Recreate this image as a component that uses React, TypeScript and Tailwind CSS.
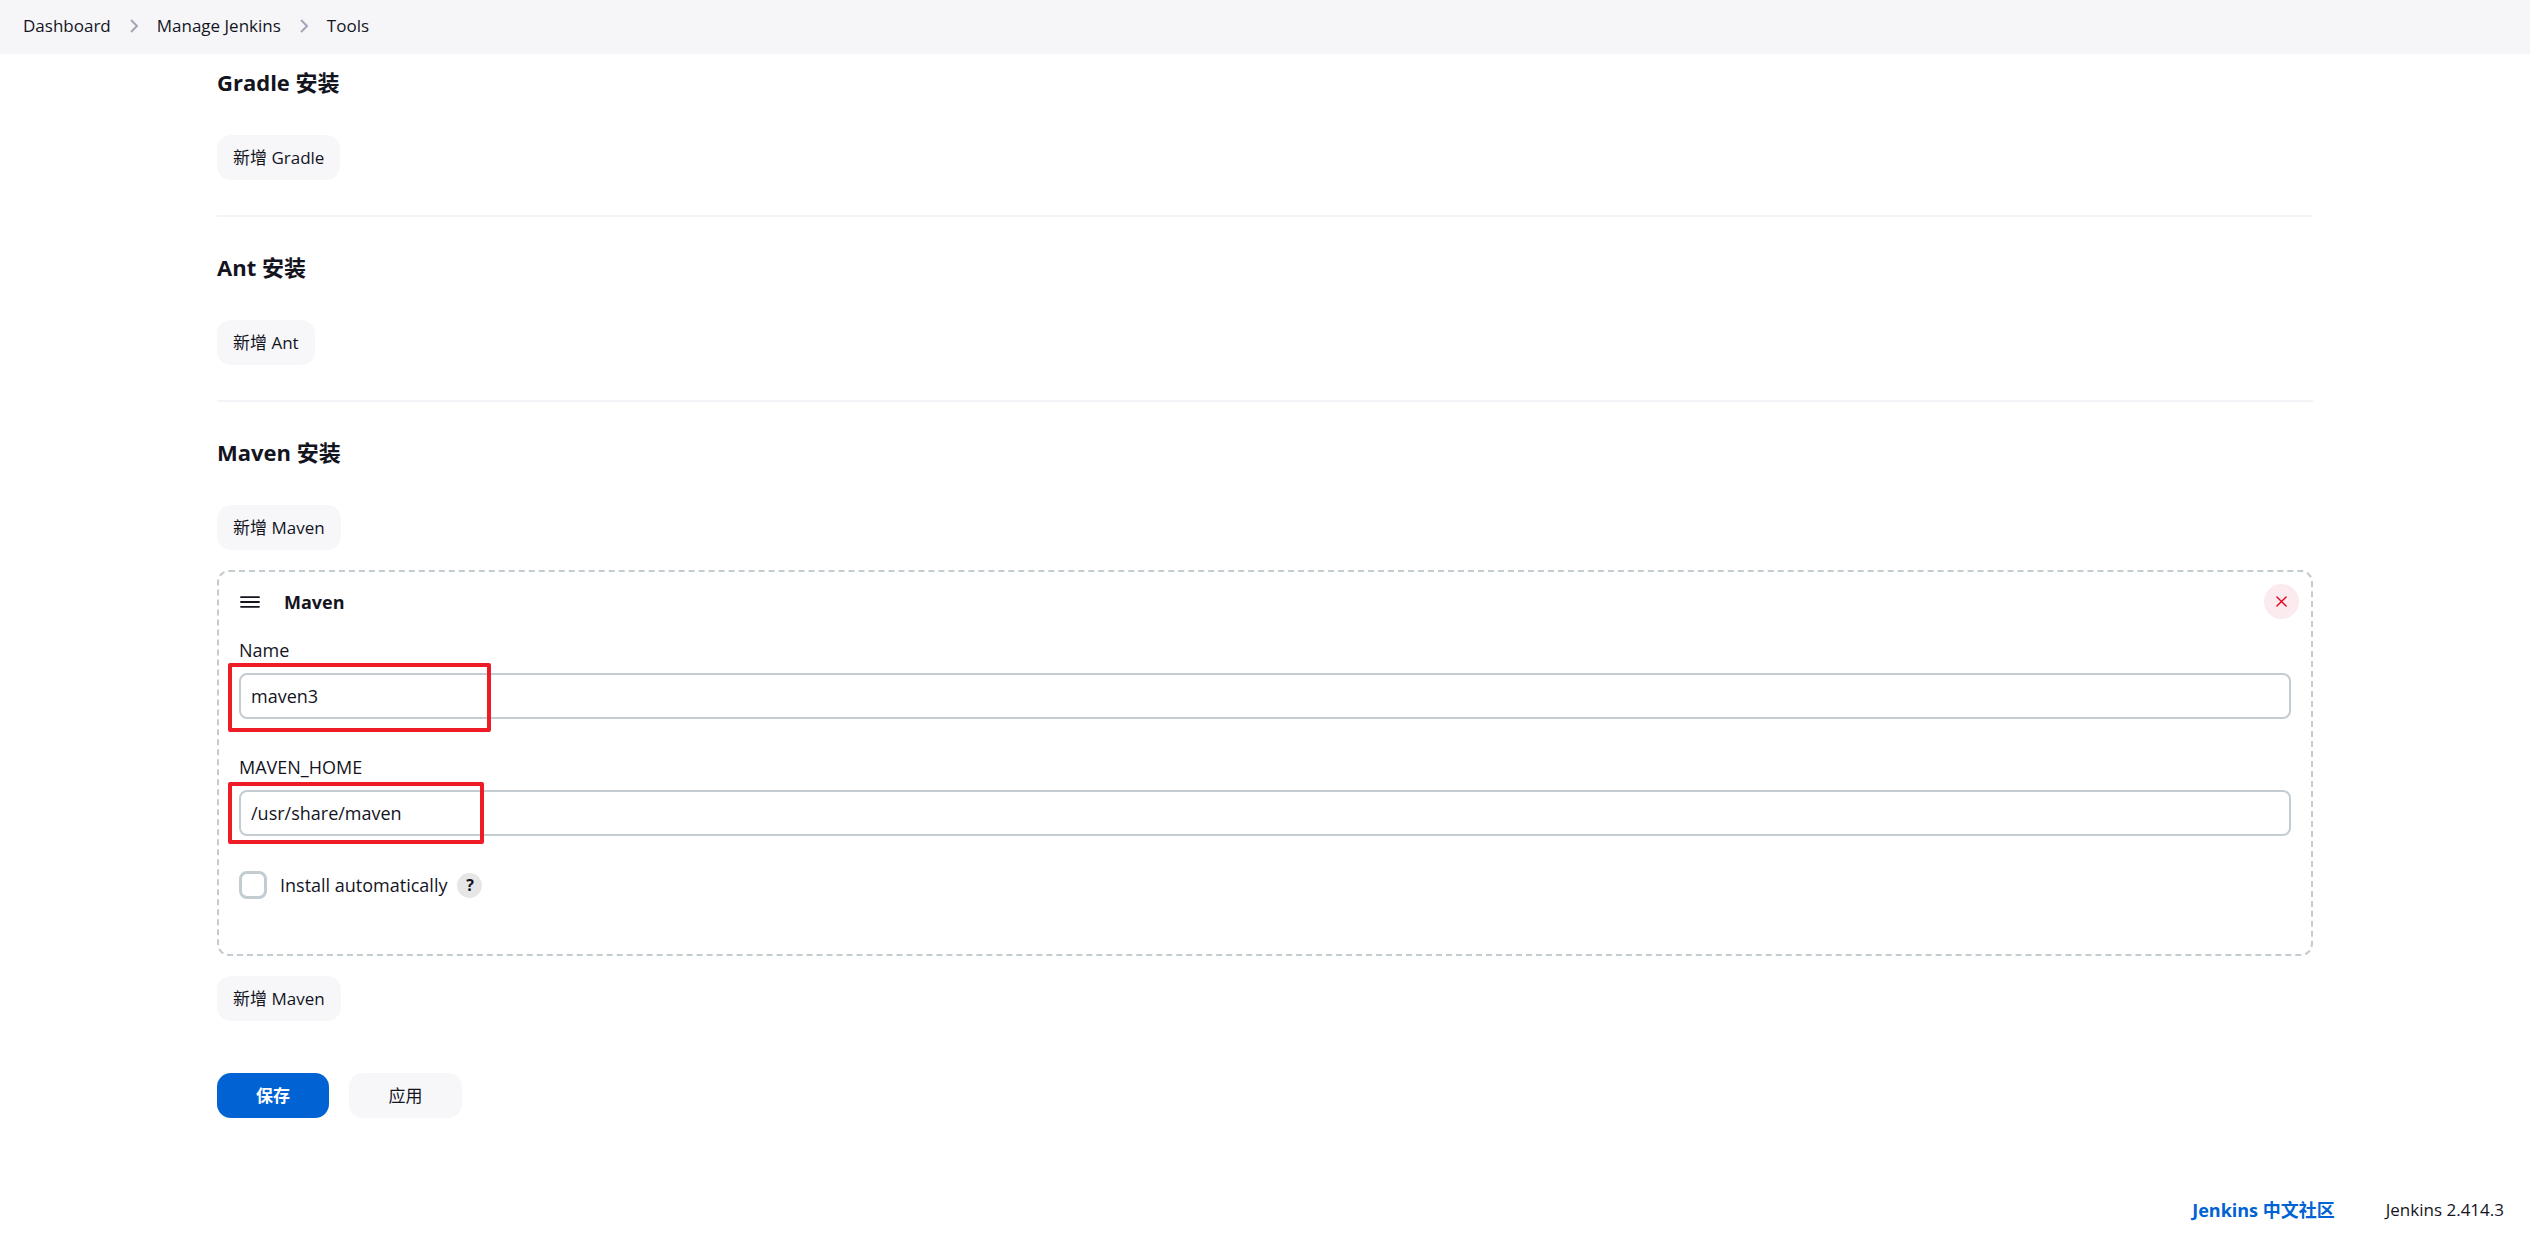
import { useState, type ReactNode } from "react";

function Chevron() {
  return (
    <svg className="h-[14px] w-2" viewBox="0 0 8 14" fill="none" stroke="#a6a6b8" strokeWidth="2" aria-hidden="true">
      <path d="M1 1l6 6-6 6" />
    </svg>
  );
}

function Button({ children, className = "px-4" }: { children: ReactNode; className?: string }) {
  return (
    <button type="button" className={`h-[45px] rounded-[14px] bg-[#f7f7f9] text-[17px] leading-6 ${className}`}>
      {children}
    </button>
  );
}

function Section({ name, children }: { name: string; children?: ReactNode }) {
  return (
    <section>
      <h2 className="mb-[37px] text-[22px] leading-8 font-bold">{name} 安装</h2>
      <Button>新增 {name}</Button>
      {children}
    </section>
  );
}

function Divider() {
  return <hr className="mt-[35px] mb-[34px] border-t-2 border-[#f3f3f8]" />;
}

type FieldProps = {
  id: string;
  label: string;
  value: string;
  onChange: (v: string) => void;
  mark: string;
};

function Field({ id, label, value, onChange, mark }: FieldProps) {
  return (
    <div>
      <label htmlFor={id} className="block pb-[11px] text-lg leading-6">
        {label}
      </label>
      <div className="relative">
        <input
          id={id}
          type="text"
          value={value}
          onChange={(e) => onChange(e.target.value)}
          className="block h-[46px] w-full rounded-lg border-2 border-[#c3ccd1] bg-white px-[10px] text-lg outline-none"
        />
        <span className={`pointer-events-none absolute rounded-[2px] border-4 border-[#ee1c25] ${mark}`} />
      </div>
    </div>
  );
}

export default function App() {
  const [name, setName] = useState("maven3");
  const [home, setHome] = useState("/usr/share/maven");
  const [auto, setAuto] = useState(false);

  return (
    <div className="bg-white font-['Open_Sans','Noto_Sans_CJK_SC',sans-serif] text-[#14141f]">
      <nav className="flex h-[54px] items-center gap-[19px] bg-[#f6f6f8] px-[23px] pb-[2px] text-[17px]">
        <a href="#dashboard">Dashboard</a>
        <Chevron />
        <a href="#manage">Manage Jenkins</a>
        <Chevron />
        <a href="#tools">Tools</a>
      </nav>

      <main className="mx-auto w-full max-w-[2096px] pt-3">
        <Section name="Gradle" />
        <Divider />
        <Section name="Ant" />
        <Divider />
        <Section name="Maven">
          <div className="my-5 rounded-xl border-2 border-dashed border-[#c3ccd1] px-5 pt-3 pb-[55px]">
            <div className="flex h-[35px] items-center">
              <svg className="ml-px h-3 w-5" viewBox="0 0 20 12" stroke="#14141f" strokeWidth="1.8" strokeLinecap="round" aria-hidden="true">
                <path d="M1 1.2h18M1 6h18M1 10.8h18" />
              </svg>
              <h3 className="ml-6 text-lg leading-6 font-bold">Maven</h3>
              <button
                type="button"
                aria-label="Delete"
                className="-mr-2 ml-auto flex size-[35px] items-center justify-center rounded-full bg-[#fcebee]"
              >
                <svg className="size-[11px]" viewBox="0 0 12 12" stroke="#e6001f" strokeWidth="1.5" strokeLinecap="round" aria-hidden="true">
                  <path d="M1 1l10 10M11 1L1 11" />
                </svg>
              </button>
            </div>
            <div className="mt-[19px] flex flex-col gap-9">
              <Field
                id="name"
                label="Name"
                value={name}
                onChange={setName}
                mark="-top-[10px] -left-[11px] h-[69px] w-[263px]"
              />
              <Field
                id="home"
                label="MAVEN_HOME"
                value={home}
                onChange={setHome}
                mark="-top-2 -left-[11px] h-[62px] w-[256px]"
              />
            </div>
            <div className="mt-[35px] flex h-7 items-center">
              <input
                id="auto"
                type="checkbox"
                checked={auto}
                onChange={(e) => setAuto(e.target.checked)}
                className="size-7 appearance-none rounded-lg border-[3px] border-[#c3ccd1] bg-white checked:bg-[#0062d3]"
              />
              <label htmlFor="auto" className="ml-[13px] text-lg leading-6">
                Install automatically
              </label>
              <button
                type="button"
                aria-label="Help for Install automatically"
                className="ml-[10px] size-[25px] rounded-full bg-[#e6e6e6] text-base leading-6 font-bold"
              >
                ?
              </button>
            </div>
          </div>
          <Button>新增 Maven</Button>
        </Section>

        <div className="mt-[52px] flex gap-5">
          <button type="submit" className="h-[45px] w-28 rounded-[14px] bg-[#0062d3] text-[17px] font-bold text-white">
            保存
          </button>
          <Button className="w-[113px]">应用</Button>
        </div>
      </main>

      <footer className="mt-20 flex items-center justify-end gap-[51px] px-[26px] pb-7">
        <a href="#community" className="text-lg leading-6 font-bold text-[#0062d3]">
          Jenkins 中文社区
        </a>
        <a href="#version" className="text-[17px] leading-6">
          Jenkins 2.414.3
        </a>
      </footer>
    </div>
  );
}
